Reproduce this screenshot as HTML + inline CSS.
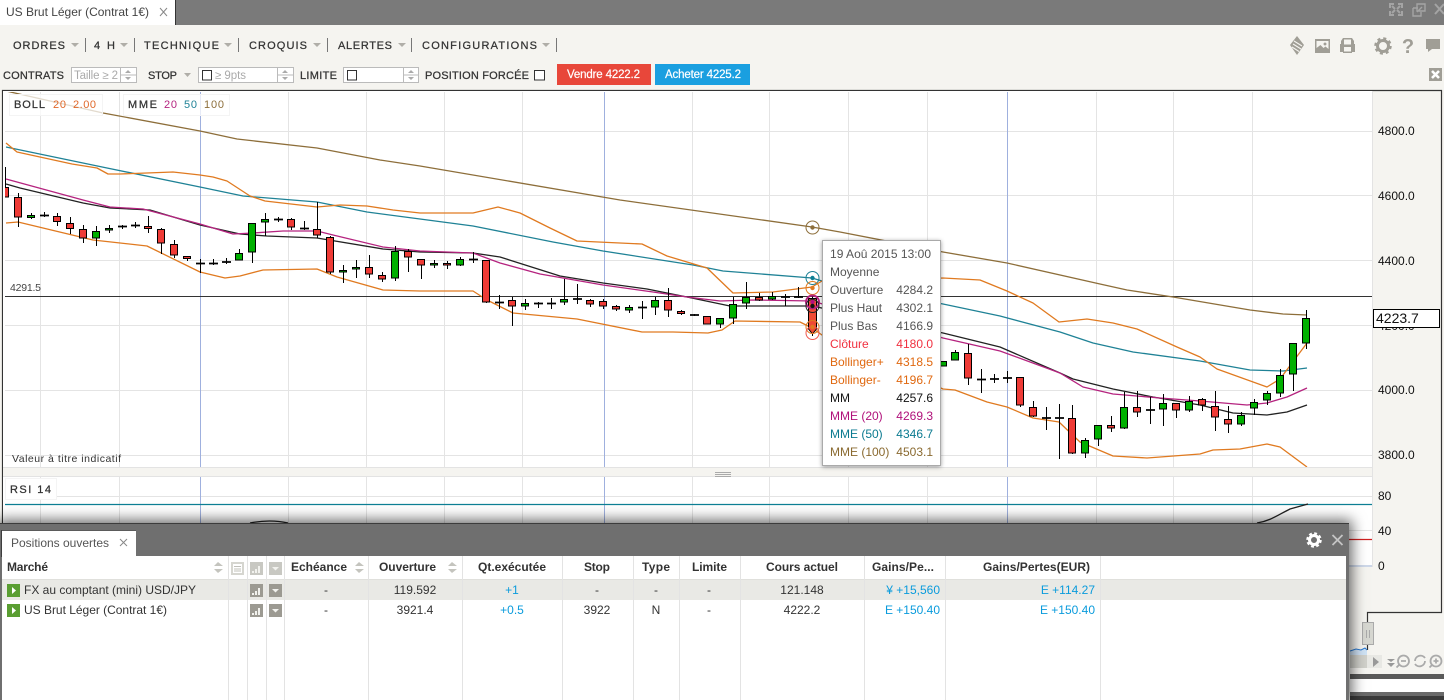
<!DOCTYPE html>
<html lang="fr">
<head>
<meta charset="utf-8">
<title>US Brut Léger</title>
<style>
html,body{margin:0;padding:0;width:1444px;height:700px;overflow:hidden;background:#f5f4f0}
body{position:relative;font-family:"Liberation Sans",sans-serif}
svg{position:absolute;left:0;top:0;display:block}
text{font-family:"Liberation Sans",sans-serif}
.panel{position:absolute;left:0;top:523px;width:1349px;height:177px;background:#6f6f6f;border-top:1px solid #3c3c3c;box-sizing:border-box;box-shadow:0 0 13px 3px rgba(0,0,0,.6)}
.m{font-size:11px;fill:#333;stroke:#333;stroke-width:.25}
.a{font-size:12px;fill:#111}
.t{font-size:12px}
.l{fill:none;stroke-width:1.3;stroke-linejoin:round}
.h{font-size:12px;font-weight:bold;fill:#333}
.r{font-size:12px;fill:#333}
.b{font-size:12px;fill:#0a9bdc}
</style>
</head>
<body>
<svg width="1444" height="700" viewBox="0 0 1444 700">
<defs>
<clipPath id="cp"><rect x="5" y="92" width="1367" height="375"/></clipPath>
<clipPath id="cr"><rect x="5" y="477" width="1367" height="90"/></clipPath>
<filter id="sh" x="-20%" y="-20%" width="140%" height="140%"><feDropShadow dx="0" dy="1" stdDeviation="2" flood-color="#000" flood-opacity=".4"/></filter>
</defs>
<!-- top bar -->
<rect width="1444" height="25" fill="#7a7a7a"/>
<rect width="175" height="25" fill="#fff"/>
<rect x="175" width="1" height="25" fill="#333"/>
<text x="6" y="16" font-size="12" fill="#444" textLength="143">US Brut Léger (Contrat 1€)</text>
<path d="M160 8l7 8M167 8l-7 8" stroke="#888" fill="none"/>
<g fill="none" stroke="#a4a4a4" stroke-width="2">
<path d="M1390 8V4h4M1398 4h4v4M1390 11v4h4M1398 15h4v-4M1392 6l3 3M1400 6l-3 3M1392 13l3-3M1400 13l-3-3"/>
<path stroke-width="1.4" d="M1413 8h5M1413 8v8h8v-4M1417 4h8v7h-8zM1417 12l5-5"/>
<path stroke-width="2" d="M1435 4l9 10M1444 4l-9 10"/>
</g>
<!-- menu -->
<g>
<text class="m" x="13" y="49" textLength="52">ORDRES</text>
<text class="m" x="94" y="49" textLength="21">4 H</text>
<text class="m" x="144" y="49" textLength="75">TECHNIQUE</text>
<text class="m" x="249" y="49" textLength="58">CROQUIS</text>
<text class="m" x="338" y="49" textLength="54">ALERTES</text>
<text class="m" x="422" y="49" textLength="115">CONFIGURATIONS</text>
</g>
<path fill="#b0aea8" d="M71 43h8l-4 4zM120 43h8l-4 4zM224 43h8l-4 4zM313 43h8l-4 4zM398 43h8l-4 4zM542 43h8l-4 4z"/>
<path stroke="#777" d="M85.500 38v14M134.500 38v14M238.500 38v14M327.500 38v14M411.500 38v14M556.500 38v14"/>
<!-- toolbar icons -->
<g fill="#a09e96">
<path d="M1297 36l7 9-7 10-7-10z"/>
<path d="M1294 41l8 5M1293 44l8 5M1292 47l7 4.500" stroke="#f5f4f0" stroke-width="1.100"/>
<path fill-rule="evenodd" d="M1315 39h15v14h-15zM1316.500 41v7l4-3 3 3 2-1.500 3 2.500v-8zM1325 42.500a1.500 1.500 0 1 0 .01 0z"/>
<path fill-rule="evenodd" d="M1343 38h9l2 3v3h1v8h-3v1h-9v-1h-3v-8h1v-3zM1344 39.500v5h7v-5zM1344 47v4.500h7V47z"/>
<circle cx="1383" cy="46" r="5.500" fill="none" stroke="#a09e96" stroke-width="3"/>
<circle cx="1383" cy="46" r="7.500" fill="none" stroke="#a09e96" stroke-width="2.500" stroke-dasharray="3 2.890"/>
<path d="M1426 39h14v10h-8l-4 3v-3h-2z"/>
<rect x="1429" y="68" width="13" height="13"/>
</g>
<text x="1408" y="53" font-size="20" font-weight="bold" fill="#a09e96" text-anchor="middle">?</text>
<path d="M1432 71l7 7M1439 71l-7 7" stroke="#fff" stroke-width="2.600"/>
<!-- row 2 -->
<g>
<text class="m" x="3" y="79" textLength="61">CONTRATS</text>
<text class="m" x="148" y="79" textLength="29">STOP</text>
<text class="m" x="300" y="79" textLength="37">LIMITE</text>
<text class="m" x="425" y="79" textLength="104">POSITION FORCÉE</text>
</g>
<path fill="#b0aea8" d="M184 73h7l-3.500 4z"/>
<g fill="#fff" stroke="#bbb">
<rect x="71.500" y="67.500" width="65" height="15"/>
<rect x="198.500" y="67.500" width="95" height="15"/>
<rect x="343.500" y="67.500" width="75" height="15"/>
</g>
<text x="74" y="79" font-size="11.500" fill="#aaa" textLength="44">Taille ≥ 2</text>
<text x="215" y="79" font-size="11.500" fill="#aaa" textLength="31">≥ 9pts</text>
<path stroke="#bbb" d="M120.500 67v16M277.500 67v16M403.500 67v16M120 75h16M277 75h16M403 75h15"/>
<path fill="#aaa" d="M125 73l3-3 3 3zM125 77l3 3 3-3zM282 73l3-3 3 3zM282 77l3 3 3-3zM408 73l3-3 3 3zM408 77l3 3 3-3z"/>
<g fill="#fff" stroke="#333">
<rect x="202.500" y="70.500" width="9" height="9.500"/>
<rect x="347.500" y="70.500" width="9" height="9.500"/>
<rect x="534.500" y="70.500" width="10" height="9.500"/>
</g>
<rect x="557" y="64" width="94" height="21" fill="#e8473a"/>
<rect x="655" y="64" width="95" height="21" fill="#1a9fe0"/>
<text x="567" y="78" font-size="11.500" fill="#fff" stroke="#fff" stroke-width=".2" textLength="73">Vendre 4222.2</text>
<text x="665" y="78" font-size="11.500" fill="#fff" stroke="#fff" stroke-width=".2" textLength="76">Acheter 4225.2</text>

<!-- chart frame -->
<path d="M2.500 700V90.500H1441.500V612.500H1367.500V650" fill="none" stroke="#333" stroke-width="1.200"/>
<rect x="3" y="91" width="1369" height="376" fill="#fff"/>
<rect x="3" y="477" width="1369" height="90" fill="#fff"/>
<rect x="3" y="467" width="1369" height="1" fill="#e3e3e3"/>
<rect x="3" y="476" width="1369" height="1" fill="#e3e3e3"/>
<rect x="1372" y="91" width="1" height="476" fill="#e3e3e3"/>
<!-- grid -->
<path stroke="#e4e4e4" fill="none" d="M5 131.500H1372M5 195.500H1372M5 260.500H1372M5 325.500H1372M5 390.500H1372M5 455.500H1372
M40.500 92V467M119.500 92V467M288.500 92V467M366.500 92V467M444.500 92V467M522.500 92V467M692.500 92V467M769.500 92V467M848.500 92V467M927.500 92V467M1096.500 92V467M1173.500 92V467M1252.500 92V467
M119.500 477V567M288.500 477V567M366.500 477V567M444.500 477V567M522.500 477V567M692.500 477V567M769.500 477V567M848.500 477V567M927.500 477V567M1096.500 477V567M1173.500 477V567M1252.500 477V567M40.500 477V567M5 496.500H1372M5 530.500H1372"/>
<path stroke="#9fb0de" fill="none" d="M200.500 92V467M604.500 92V467M1007.500 92V467M200.500 477V567M604.500 477V567M1007.500 477V567"/>
<rect x="3" y="468" width="1369" height="8" fill="#f5f4f0"/>
<path stroke="#aaa" d="M715 472.500h16M715 474.500h16M715 476.500h16" fill="none"/>
<path stroke="#333" d="M5 296.500H1372" fill="none"/>

<g clip-path="url(#cp)">
<!-- lines under candles -->
<polyline class="l" stroke="#8d6e3a" points="6,91 103,113 200,131 237,139 317,148 380,160 420,166 620,200 812,227 840,232 943,252 1007,263 1100,284 1127,290 1173,297 1250,310 1283,314 1307,315"/>
<polyline class="l" stroke="#1f8296" points="6,147 107,168 200,187 243,196 317,202 367,212 420,219 473,226 553,242 603,251 693,265 723,271 812,278 822,281 943,304 1000,316 1060,332 1093,343 1133,352 1200,361 1250,370 1283,371 1307,368"/>
<polyline class="l" stroke="#e07a20" points="6,143 17,152 72,164 97,168 108,174 120,174 173,172 200,175 213,177 227,181 250,196 265,201 317,207 340,205 367,206 393,210 420,213 473,213 498,207 520,213 550,228 577,241 642,244 667,256 707,268 733,293 773,292 812,287 822,281 943,278 980,280 1007,291 1033,303 1059,322 1087,319 1113,323 1137,329 1177,347 1200,357 1217,369 1267,387 1280,379 1307,343"/>
<polyline class="l" stroke="#e07a20" points="6,223 18,222 93,240 147,246 200,272 225,278 240,276 263,270 317,269 337,277 383,290 420,291 473,291 487,300 513,313 577,319 642,332 673,332 708,333 722,330 735,321 800,322 812,328 822,335 943,389 955,390 987,402 1007,407 1033,418 1059,422 1080,442 1113,456 1147,458 1200,454 1213,450 1240,449 1267,444 1280,447 1307,467"/>
<polyline class="l" stroke="#222" points="6,184 20,188 83,203 110,208 150,210 200,225 240,234 267,236 317,238 383,249 420,252 473,253 500,257 560,276 603,283 647,289 687,297 730,306 812,306 943,333 1000,347 1060,373 1073,379 1113,389 1153,397 1200,405 1233,413 1267,415 1287,412 1307,405"/>
<polyline class="l" stroke="#b5237f" points="6,179 83,200 110,207 143,209 200,224 233,234 253,233 283,231 317,231 333,235 383,247 420,251 473,253 500,263 540,274 603,285 653,292 687,297 720,301 753,300 812,301 943,338 1000,351 1060,373 1083,387 1113,394 1160,398 1200,401 1247,405 1267,403 1287,397 1307,388"/>

<!-- wicks -->
<path stroke="#000" fill="none" d="M5.500 167V197M18.500 193V227M31.500 213V219M44.500 212V217M57.500 213V226M70.500 217V234M83.500 225V243M96.500 226V246M109.500 225V233M122.500 225V229M135.500 222V228M148.500 216V233M161.500 228V254M174.500 240V258M187.500 256V261M200.500 259V273M213.500 259V265M226.500 258V264M239.500 249V260M252.500 223V263M265.500 213V236M278.500 217V222M291.500 218V230M304.500 221V230M317.500 202V238M330.500 236V274M343.500 265V283M356.500 260V278M369.500 255V278M382.500 272V282M395.500 246V281M408.500 249V272M421.500 259V279M434.500 260V268M447.500 261V269M460.500 257V266M473.500 252V263M486.500 260V303M499.500 295V309M512.500 297V326M525.500 299V310M538.500 302V308M551.500 298V309M564.500 279V305M577.500 284V304M590.500 299V307M603.500 299V309M616.500 305V311M629.500 305V313M642.500 301V319M655.500 297V315M668.500 288V317M681.500 310V315M694.500 314V316M707.500 316V324M720.500 318V328M733.500 297V324M746.500 282V309M759.500 293V301M772.500 292V300M785.500 294V306M798.500 287V298M812.500 295V336M825.500 332V356M943.500 361V366M955.500 350V360M968.500 344V385M981.500 369V393M994.500 374V383M1007.500 371V383M1020.500 377V407M1033.500 401V417M1046.500 407V430M1059.500 404V459M1072.500 405V454M1085.500 438V458M1098.500 425V446M1111.500 416V432M1124.500 392V429M1137.500 391V417M1150.500 397V424M1163.500 394V426M1176.500 403V418M1189.500 396V412M1202.500 398V411M1215.500 391V431M1228.500 406V433M1241.500 412V426M1254.500 399V415M1267.500 391V405M1280.500 369V397M1293.500 343V391M1306.500 310V349"/>
<!-- doji -->
<path stroke="#000" stroke-width="1.800" fill="none" d="M40 215.500h9M118 226.500h9M131 225.500h9M196 263.500h9M209 263.500h9M222 262h9M274 219.500h9M300 228.500h9M469 259.500h9M495 302.500h9M534 303.500h9M547 303.500h9M573 299h9M638 307.500h9M690 315h9M781 297h9M794 297h9M977 379.500h9M990 379h9M1003 378h9M1042 418h9M1055 418h9M1146 410h9"/>
<!-- red bodies -->
<path fill="#ef3b36" stroke="#000" d="M4 187.500h4.500v9.500h-4.500zM14.500 197.500h7v19.500h-7zM53.500 216.500h7v5h-7zM66.500 223.500h7v5h-7zM79.500 229.500h7v8.500h-7zM144.500 226.500h7v2h-7zM157.500 229.500h7v13.500h-7zM170.500 244.500h7v10.500h-7zM183.500 256.500h7v2h-7zM287.500 219.500h7v7.500h-7zM313.500 229.500h7v5.500h-7zM326.500 237.500h7v34.500h-7zM365.500 267.500h7v6.500h-7zM378.500 275.500h7v3.500h-7zM404.500 251.500h7v5.500h-7zM417.500 259.500h7v5.500h-7zM443.500 263.500h7v1.500h-7zM482.500 260.500h7v41.500h-7zM508.500 300.500h7v5.500h-7zM586.500 300.500h7v3.500h-7zM599.500 301.500h7v4.500h-7zM612.500 306.500h7v2.500h-7zM664.500 300.500h7v9.500h-7zM677.500 311.500h7v2h-7zM703.500 316.500h7v7.500h-7zM755.500 297.500h7v2.500h-7zM964.500 353.500h7v24.500h-7zM1016.500 377.500h7v27.500h-7zM1029.500 407.500h7v8.500h-7zM1068.500 418.500h7v34.500h-7zM1107.500 425.500h7v2.500h-7zM1133.500 407.500h7v4.500h-7zM1172.500 403.500h7v6.500h-7zM1198.500 399.500h7v5.500h-7zM1211.500 406.500h7v10.500h-7zM1224.500 419.500h7v4.500h-7z"/>
<!-- green bodies -->
<path fill="#00b000" stroke="#000" d="M27.500 215.500h7v2h-7zM92.500 231.500h7v6.500h-7zM105.500 228.500h7v1.500h-7zM235.500 253.500h7v6.500h-7zM248.500 223.500h7v28.500h-7zM261.500 219.500h7v2.500h-7zM339.500 270.500h7v1.500h-7zM352.500 267.500h7v1.500h-7zM391.500 251.500h7v26.500h-7zM430.500 263.500h7v1.500h-7zM456.500 259.500h7v5.500h-7zM521.500 303.500h7v2.500h-7zM560.500 299.500h7v2.500h-7zM625.500 307.500h7v2.500h-7zM651.500 300.500h7v6.500h-7zM716.500 318.500h7v5.500h-7zM729.500 304.500h7v13.500h-7zM742.500 297.500h7v5.500h-7zM768.500 296.500h7v2.500h-7zM939.500 361.500h7v4.500h-7zM951.500 352.500h7v7.500h-7zM1081.500 440.500h7v12.500h-7zM1094.500 425.500h7v13.500h-7zM1120.500 407.500h7v20.500h-7zM1159.500 403.500h7v5.500h-7zM1185.500 401.500h7v8.500h-7zM1237.500 415.500h7v8.500h-7zM1250.500 402.500h7v5.500h-7zM1263.500 393.500h7v6.500h-7zM1276.500 375.500h7v17.500h-7zM1289.500 343.500h7v30.500h-7zM1302.500 318.500h7v24.500h-7z"/>
<!-- highlighted candle -->
<path fill="#ef4a34" stroke="#000" d="M808.500 298.500h8V329l-4 5-4-5z"/>
<g fill="none">
<circle cx="812.500" cy="227.500" r="6.500" stroke="#8d6e3a"/>
<circle cx="812.500" cy="278" r="6.500" stroke="#1f8296"/>
<circle cx="812.500" cy="288" r="6.500" stroke="#e07a20"/>
<circle cx="812.500" cy="302" r="6.500" stroke="#b5237f" stroke-width="2"/>
<circle cx="812.500" cy="306" r="6.500" stroke="#222"/>
<circle cx="812.500" cy="327" r="6.500" stroke="#e07a20"/>
<circle cx="812.500" cy="333" r="6.500" stroke="#f0584f"/>
</g>
<circle cx="812.500" cy="227.500" r="2.200" fill="#8d6e3a"/>
<circle cx="812.500" cy="278" r="2.200" fill="#0d7f94"/>
<circle cx="812.500" cy="288" r="2.200" fill="#e07a20"/>
<circle cx="812.500" cy="302" r="2.200" fill="#b5107f"/>
<circle cx="812.500" cy="306" r="2.200" fill="#111"/>
<circle cx="812.500" cy="327" r="2.200" fill="#e07a20"/>
</g>

<!-- legends -->
<rect x="9.500" y="94.500" width="93" height="21" fill="#fff" fill-opacity=".75" stroke="#f4f4f4"/>
<rect x="123.500" y="94.500" width="106" height="21" fill="#fff" fill-opacity=".75" stroke="#f4f4f4"/>
<text x="14" y="108" font-size="11" fill="#333" stroke="#333" stroke-width=".25" textLength="31">BOLL</text>
<text x="53" y="108" font-size="11" fill="#e0682a" textLength="13">20</text>
<text x="73" y="108" font-size="11" fill="#e0682a" textLength="23">2.00</text>
<text x="128" y="108" font-size="11" fill="#333" stroke="#333" stroke-width=".25" textLength="29">MME</text>
<text x="164" y="108" font-size="11" fill="#b5237f" textLength="13">20</text>
<text x="184" y="108" font-size="11" fill="#1f8296" textLength="13">50</text>
<text x="204" y="108" font-size="11" fill="#8d6e3a" textLength="20">100</text>
<text x="10" y="291" font-size="10.500" fill="#444" textLength="31">4291.5</text>
<text x="12" y="462" font-size="10.500" fill="#333" textLength="109">Valeur à titre indicatif</text>
<!-- axis -->
<g>
<text class="a" x="1378" y="135">4800.0</text>
<text class="a" x="1378" y="200">4600.0</text>
<text class="a" x="1378" y="265">4400.0</text>
<text class="a" x="1378" y="330">4200.0</text>
<text class="a" x="1378" y="394">4000.0</text>
<text class="a" x="1378" y="459">3800.0</text>
</g>
<rect x="1373.500" y="309.500" width="66" height="18" fill="#fff" stroke="#000"/>
<text x="1376" y="323" font-size="14" fill="#111">4223.7</text>

<!-- tooltip -->
<rect x="822.500" y="240.500" width="118" height="225" fill="#fff" stroke="#aaa" filter="url(#sh)"/>
<g>
<text class="t" x="830" y="258" fill="#555" textLength="101">19 Aoû 2015 13:00</text>
<text class="t" x="830" y="276" fill="#555">Moyenne</text>
<text class="t" x="830" y="294" fill="#555">Ouverture</text><text class="t" x="933" y="294" fill="#555" text-anchor="end">4284.2</text>
<text class="t" x="830" y="312" fill="#555">Plus Haut</text><text class="t" x="933" y="312" fill="#555" text-anchor="end">4302.1</text>
<text class="t" x="830" y="330" fill="#555">Plus Bas</text><text class="t" x="933" y="330" fill="#555" text-anchor="end">4166.9</text>
<text class="t" x="830" y="348" fill="#f0303f">Clôture</text><text class="t" x="933" y="348" fill="#f0303f" text-anchor="end">4180.0</text>
<text class="t" x="830" y="366" fill="#e0680f">Bollinger+</text><text class="t" x="933" y="366" fill="#e0680f" text-anchor="end">4318.5</text>
<text class="t" x="830" y="384" fill="#e0680f">Bollinger-</text><text class="t" x="933" y="384" fill="#e0680f" text-anchor="end">4196.7</text>
<text class="t" x="830" y="402" fill="#111">MM</text><text class="t" x="933" y="402" fill="#111" text-anchor="end">4257.6</text>
<text class="t" x="830" y="420" fill="#b0107a">MME (20)</text><text class="t" x="933" y="420" fill="#b0107a" text-anchor="end">4269.3</text>
<text class="t" x="830" y="438" fill="#0a7a90">MME (50)</text><text class="t" x="933" y="438" fill="#0a7a90" text-anchor="end">4346.7</text>
<text class="t" x="830" y="456" fill="#8a6a30">MME (100)</text><text class="t" x="933" y="456" fill="#8a6a30" text-anchor="end">4503.1</text>
</g>

<!-- RSI -->
<rect x="5.500" y="478.500" width="51" height="21" fill="#fff" stroke="#f4f4f4"/>
<text x="10" y="493" font-size="11" fill="#333" stroke="#333" stroke-width=".25" textLength="41">RSI  14</text>
<g clip-path="url(#cr)">
<path stroke="#0d7f94" stroke-width="1.200" fill="none" d="M5 504.500H1372"/>
<path stroke="#d02020" stroke-width="1.200" fill="none" d="M5 539.500H1372"/>
<path stroke="#b0c0dc" stroke-width="1.200" fill="none" d="M5 566H1372"/>
<path stroke="#222" stroke-width="1.300" fill="none" d="M250 523Q270 519 288 523M1257 523C1270 521 1278 515 1290 509L1308 504"/>
</g>
<text class="a" x="1378" y="500">80</text>
<text class="a" x="1378" y="535">40</text>
<text class="a" x="1378" y="570">0</text>

<!-- navigator -->
<path d="M1350 655V651l6-2 5 1 4-2 2 2v5z" fill="#cfe2f5" stroke="none"/>
<path d="M1350 651l6-2 5 1 4-2 2 2" fill="none" stroke="#2878d0"/>
<rect x="1350" y="655" width="32" height="13" fill="#e8e8e4"/>
<rect x="1350" y="655" width="17" height="13" fill="#d0d0ca"/>
<path fill="#999" d="M1373 657l6 5-6 5z"/>
<rect x="1362.500" y="622.500" width="11" height="22" fill="#d6d7d1" stroke="#aaa"/>
<path stroke="#aaa" d="M1366.500 630v8M1369.500 630v8"/>
<path fill="#999" d="M1387 659h8l-4 3zM1387 663h8l-4 4z"/>
<g fill="none" stroke="#aaa" stroke-width="1.800">
<circle cx="1403.500" cy="661" r="5.500"/><path d="M1399 665l-2.500 2.500M1401 661h5"/>
<path d="M1415 661a5.500 5.500 0 0 1 10-3M1425 661a5.500 5.500 0 0 1-10 3"/>
<circle cx="1436" cy="661" r="5.500"/><path d="M1432 665l-2.500 2.500M1433.500 661h5M1436 658.500v5"/>
</g>
<rect x="1350" y="674" width="94" height="5" fill="#5a5a5a"/>
<rect x="1350" y="679" width="94" height="13" fill="#fff"/>
<rect x="1350" y="692" width="94" height="4" fill="#6a6a6a"/>
<rect x="1350" y="696" width="94" height="4" fill="#3a3a3a"/>
</svg>

<div class="panel"></div>

<svg width="1444" height="700" viewBox="0 0 1444 700">
<rect x="2" y="556" width="1344" height="144" fill="#fff"/>
<rect x="2" y="530" width="134" height="26" fill="#fff"/>
<rect x="1.500" y="530.500" width="134" height="26" fill="none" stroke="#333" stroke-width=".8"/>
<rect x="2" y="531" width="134" height="26" fill="#fff"/>
<text x="11" y="547" font-size="12" fill="#555" textLength="98">Positions ouvertes</text>
<path d="M120 539l7 7M127 539l-7 7" stroke="#888" fill="none"/>
<circle cx="1314" cy="540" r="4.500" fill="none" stroke="#fff" stroke-width="3"/>
<circle cx="1314" cy="540" r="6.500" fill="none" stroke="#fff" stroke-width="2.500" stroke-dasharray="2.800 2.300"/>
<path d="M1332.500 535l10 10M1342.500 535l-10 10" stroke="#c4c4c4" stroke-width="1.800" fill="none"/>

<rect x="2" y="579" width="1344" height="1" fill="#e0e0dc"/>
<rect x="2" y="580" width="1344" height="20" fill="#e9e9e5"/>
<path stroke="#e3e3e3" fill="none" d="M228.500 556V700M247.500 556V700M266.500 556V700M284.500 556V700M368.500 556V700M462.500 556V700M562.500 556V700M633.500 556V700M679.500 556V700M740.500 556V700M864.500 556V700M945.500 556V700M1100.500 556V700"/>

<g>
<text class="h" x="7" y="571" textLength="41">Marché</text>
<text class="h" x="291" y="571" textLength="56">Echéance</text>
<text class="h" x="379" y="571" textLength="57">Ouverture</text>
<text class="h" x="478" y="571" textLength="68">Qt.exécutée</text>
<text class="h" x="584" y="571" textLength="26">Stop</text>
<text class="h" x="642" y="571" textLength="28">Type</text>
<text class="h" x="692" y="571" textLength="35">Limite</text>
<text class="h" x="766" y="571" textLength="72">Cours actuel</text>
<text class="h" x="872" y="571" textLength="62">Gains/Pe...</text>
<text class="h" x="983" y="571" textLength="107">Gains/Pertes(EUR)</text>
</g>
<path fill="#c4c4be" d="M214 566l4-4 5 4zM214 569l4 4 5-4zM355 566l4-4 5 4zM355 569l4 4 5-4zM448 566l4-4 5 4zM448 569l4 4 5-4z"/>
<!-- header icons -->
<rect x="231" y="562" width="13" height="13" fill="#d6d6d0"/>
<path fill="#fff" d="M233 564h9v9h-9z"/>
<path stroke="#c0c0ba" d="M234 566.500h7M234 569h7M234 571h7"/>
<rect x="250" y="562" width="13" height="13" fill="#c8c8c2"/>
<path fill="#f2f2ee" d="M252 571h2v2h-2zM255 569h2v4h-2zM258 566h2v7h-2z"/>
<rect x="269" y="562" width="13" height="13" fill="#c8c8c2"/>
<path fill="#f2f2ee" d="M272 567h7l-3.500 3.500z"/>
<!-- row icons -->
<g>
<rect x="7" y="584" width="13" height="13" fill="#5a9e32"/>
<path fill="#fff" d="M12 587l4 3.500-4 3.500z"/>
<rect x="250" y="584" width="13" height="13" fill="#9c9a92"/>
<path fill="#f2f2ee" d="M252 593h2v2h-2zM255 591h2v4h-2zM258 588h2v7h-2z"/>
<rect x="269" y="584" width="13" height="13" fill="#9c9a92"/>
<path fill="#f2f2ee" d="M272 589h7l-3.500 3.500z"/>
<rect x="7" y="604" width="13" height="13" fill="#5a9e32"/>
<path fill="#fff" d="M12 607l4 3.500-4 3.500z"/>
<rect x="250" y="604" width="13" height="13" fill="#9c9a92"/>
<path fill="#f2f2ee" d="M252 613h2v2h-2zM255 611h2v4h-2zM258 608h2v7h-2z"/>
<rect x="269" y="604" width="13" height="13" fill="#9c9a92"/>
<path fill="#f2f2ee" d="M272 609h7l-3.500 3.500z"/>
</g>
<g text-anchor="middle">
<text class="r" x="326" y="594">-</text>
<text class="r" x="415" y="594">119.592</text>
<text class="b" x="512" y="594">+1</text>
<text class="r" x="597" y="594">-</text>
<text class="r" x="656" y="594">-</text>
<text class="r" x="709" y="594">-</text>
<text class="r" x="802" y="594">121.148</text>
<text class="r" x="326" y="614">-</text>
<text class="r" x="415" y="614">3921.4</text>
<text class="b" x="512" y="614">+0.5</text>
<text class="r" x="597" y="614">3922</text>
<text class="r" x="656" y="614">N</text>
<text class="r" x="709" y="614">-</text>
<text class="r" x="802" y="614">4222.2</text>
</g>
<text class="r" x="24" y="594" textLength="172">FX au comptant (mini) USD/JPY</text>
<text class="r" x="24" y="614" textLength="143">US Brut Léger (Contrat 1€)</text>
<g text-anchor="end">
<text class="b" x="940" y="594">¥ +15,560</text>
<text class="b" x="1095" y="594">E +114.27</text>
<text class="b" x="940" y="614">E +150.40</text>
<text class="b" x="1095" y="614">E +150.40</text>
</g>
</svg>
</body>
</html>
